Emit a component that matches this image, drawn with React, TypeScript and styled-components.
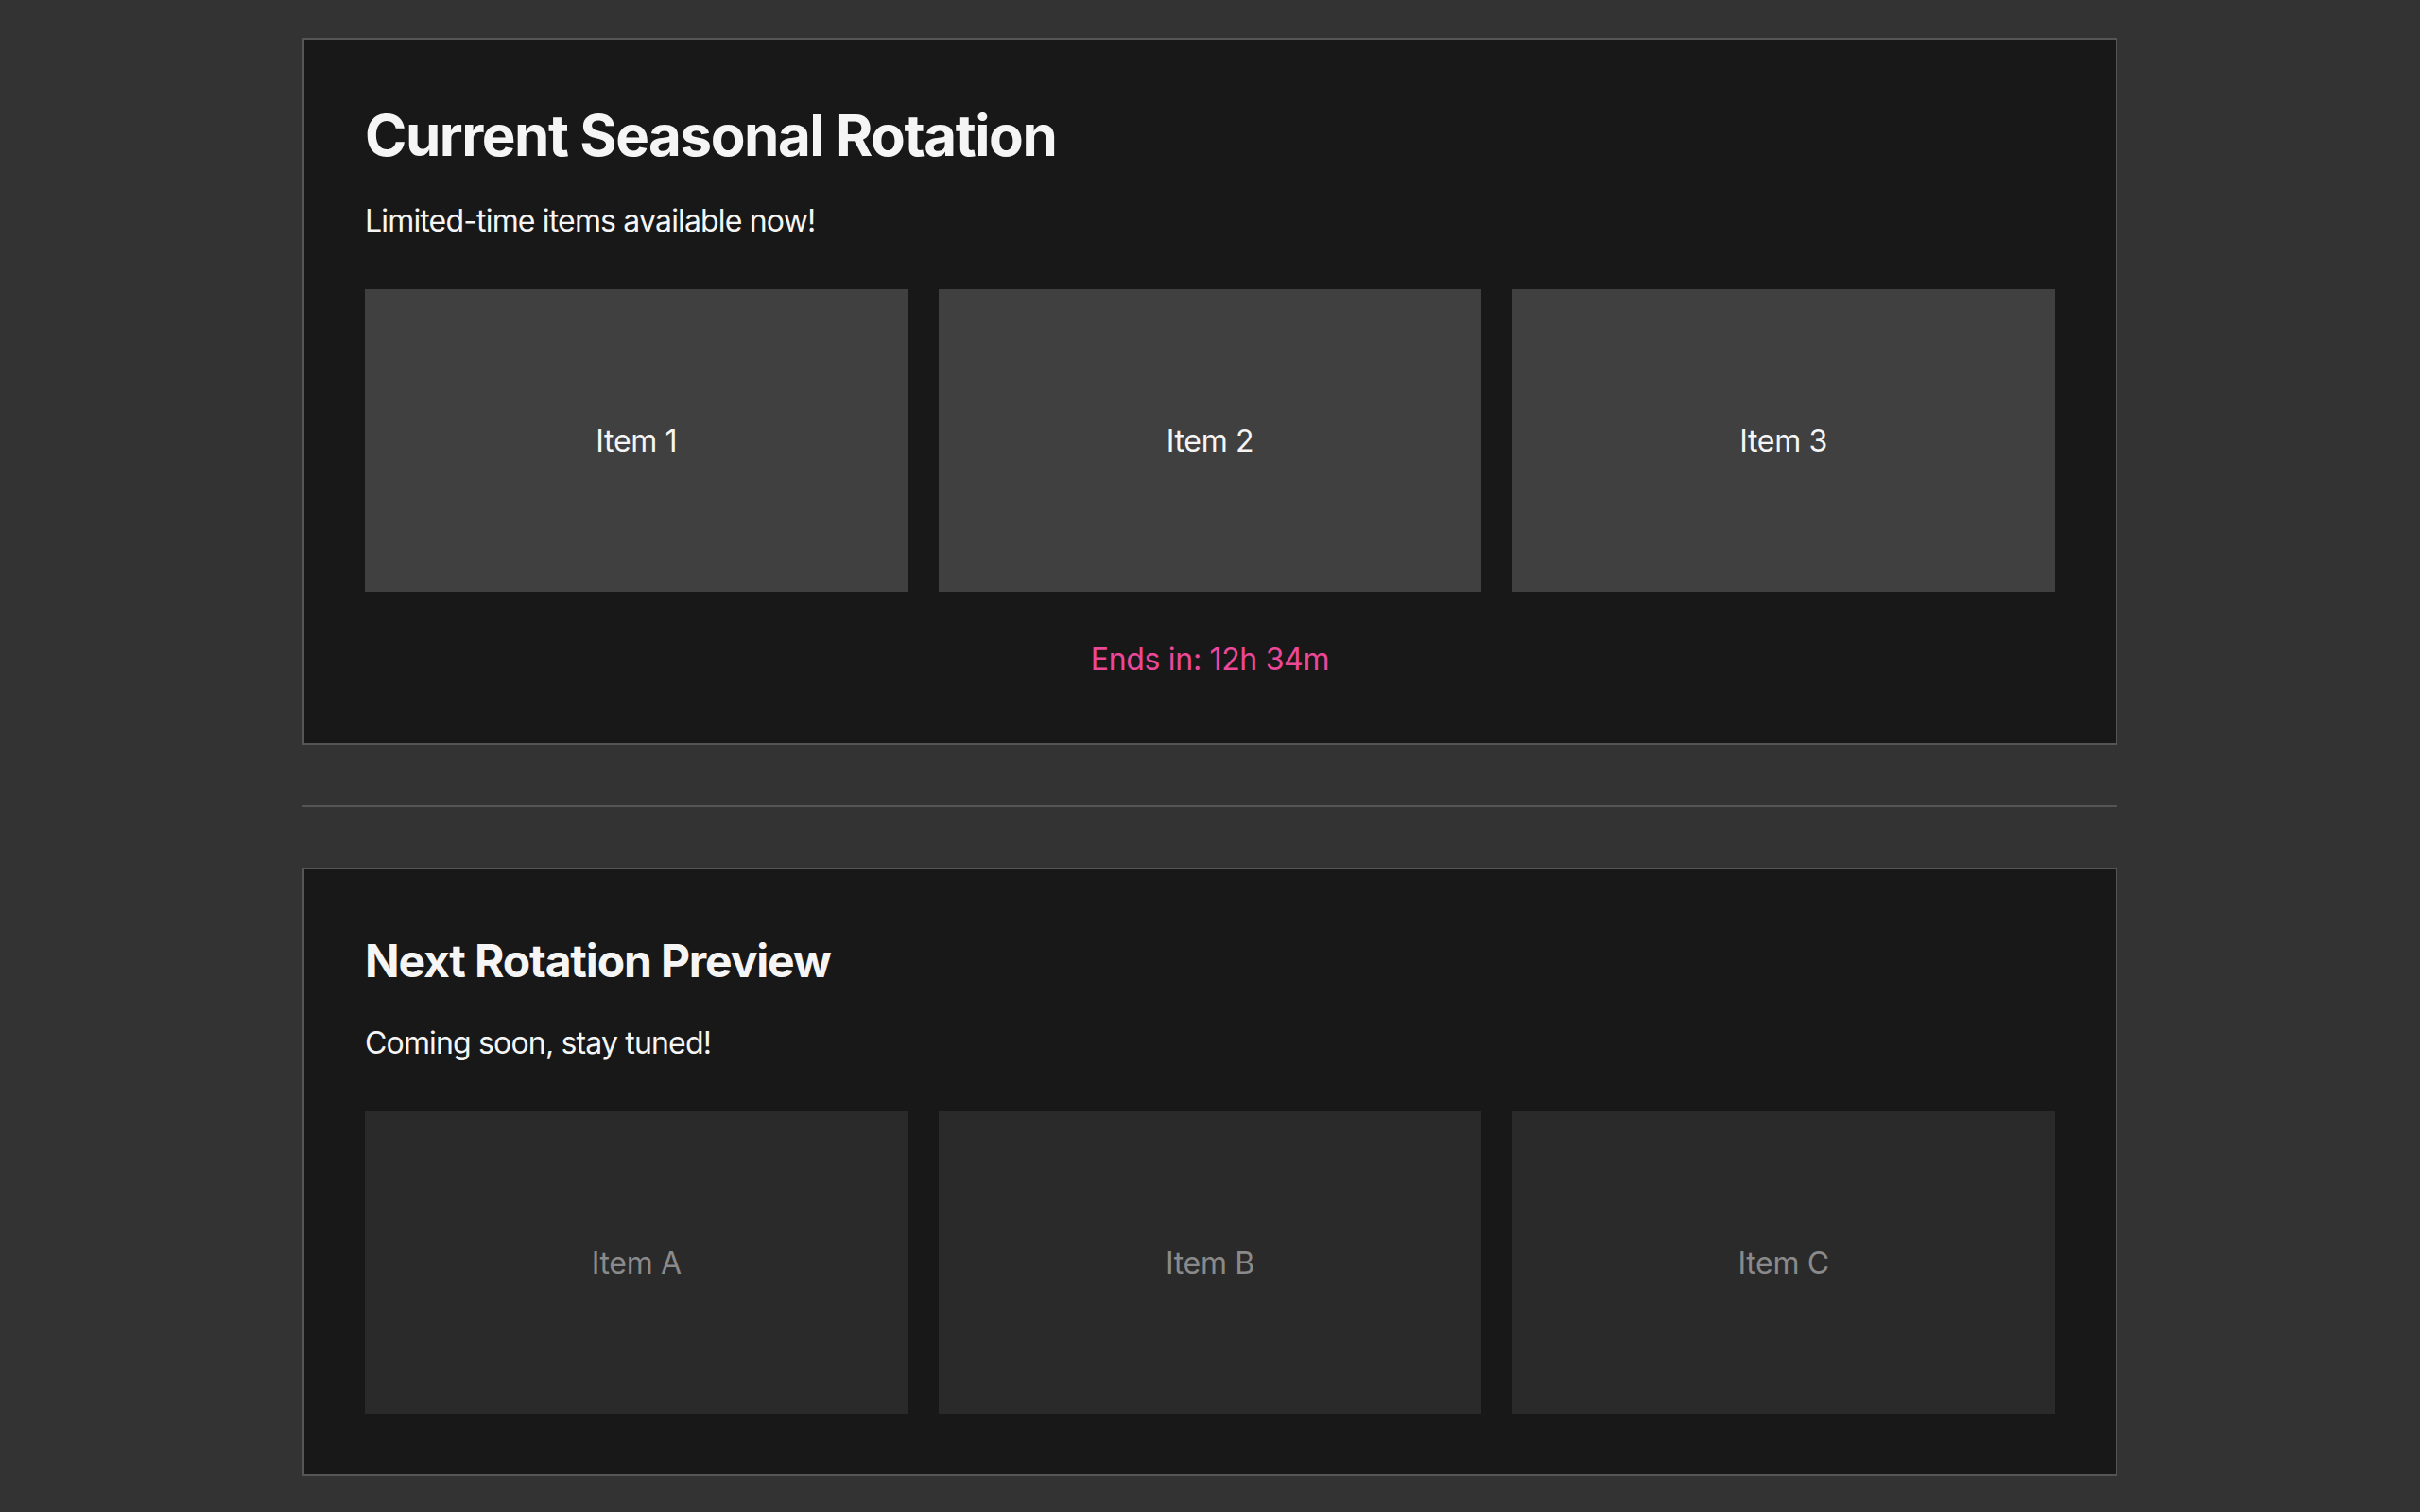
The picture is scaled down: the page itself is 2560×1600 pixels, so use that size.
import styled, { createGlobalStyle } from "styled-components";

const GlobalStyle = createGlobalStyle`
  html, body {
    margin: 0;
    padding: 0;
    background-color: #333333;
  }
  body {
    font-family: "Inter", "Noto Sans", "Liberation Sans", sans-serif;
    color: #f5f5f5;
    letter-spacing: -0.02em;
  }
`;

const Page = styled.div`
  display: flex;
  flex-direction: column;
  align-items: center;
  padding: 40px 0;
`;

const Panel = styled.section`
  width: 1920px;
  box-sizing: border-box;
  padding: 64px;
  background-color: #181818;
  border: 2px solid #555555;
`;

const Divider = styled.hr`
  width: 1920px;
  height: 2px;
  margin: 64px 0;
  border: none;
  background-color: #555555;
`;

const Title = styled.h1<{ $size: number; $lh: number }>`
  margin: 0;
  font-size: ${(p) => p.$size}px;
  line-height: ${(p) => p.$lh}px;
  font-weight: 700;
  letter-spacing: -0.024em;
  color: #f5f5f5;
`;

const Subtitle = styled.p<{ $top: number }>`
  margin: ${(p) => p.$top}px 0 0;
  font-size: 32px;
  line-height: 48px;
  letter-spacing: -0.026em;
  color: #f5f5f5;
`;

const ItemGrid = styled.div`
  display: grid;
  grid-template-columns: repeat(3, 1fr);
  gap: 32px;
  margin-top: 48px;
`;

const ItemCard = styled.div<{ $muted?: boolean }>`
  height: 320px;
  display: flex;
  align-items: center;
  justify-content: center;
  font-size: 32px;
  background-color: ${(p) => (p.$muted ? "#2a2a2a" : "#404040")};
  color: ${(p) => (p.$muted ? "#8a8a8a" : "#f5f5f5")};
`;

const Countdown = styled.p`
  margin: 48px 0 0;
  text-align: center;
  font-size: 32px;
  line-height: 48px;
  color: #ec4899;
`;

const current = ["Item 1", "Item 2", "Item 3"];
const upcoming = ["Item A", "Item B", "Item C"];

export default function App() {
  return (
    <>
      <GlobalStyle />
      <Page>
        <Panel>
          <Title as="h1" $size={60} $lh={75}>
            Current Seasonal Rotation
          </Title>
          <Subtitle $top={29}>Limited-time items available now!</Subtitle>
          <ItemGrid>
            {current.map((item) => (
              <ItemCard key={item}>{item}</ItemCard>
            ))}
          </ItemGrid>
          <Countdown>Ends in: 12h 34m</Countdown>
        </Panel>

        <Divider />

        <Panel>
          <Title as="h2" $size={48} $lh={65}>
            Next Rotation Preview
          </Title>
          <Subtitle $top={31}>Coming soon, stay tuned!</Subtitle>
          <ItemGrid>
            {upcoming.map((item) => (
              <ItemCard key={item} $muted>
                {item}
              </ItemCard>
            ))}
          </ItemGrid>
        </Panel>
      </Page>
    </>
  );
}
